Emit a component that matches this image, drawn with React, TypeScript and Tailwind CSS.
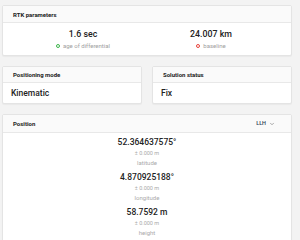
import { ChevronDown } from "lucide-react";

function Card({ title, right, head = "h-[17px]", children }: { title: string; right?: React.ReactNode; head?: string; children: React.ReactNode }) {
  return (
    <div className="rounded-[2px] border border-[#e4e4e4] bg-white shadow-[0_1px_1px_rgba(0,0,0,0.04)]">
      <div className={`flex items-center justify-between border-b border-[#e8e8e8] bg-[#fafafa] pl-[10px] pr-[10px] ${head}`}>
        <span className="text-[6px] font-bold text-[#222]">{title}</span>
        {right}
      </div>
      {children}
    </div>
  );
}

function Stat({ value, label, color }: { value: string; label: string; color: string }) {
  return (
    <div className="flex flex-col items-center">
      <span className="text-[8.8px] font-medium leading-[12px] text-[#222]">{value}</span>
      <span className="mt-[1px] flex items-center gap-[3px] text-[6px] leading-[9px] text-[#a0a0a0]">
        <span className={`inline-block h-[4px] w-[4px] rounded-full border-[1.2px] ${color}`} />
        {label}
      </span>
    </div>
  );
}

function Coord({ value, label }: { value: string; label: string }) {
  return (
    <div className="flex flex-col items-center">
      <span className="text-[8.5px] font-medium leading-[12px] text-[#222]">{value}</span>
      <span className="mt-[1px] text-[5.5px] leading-[9px] text-[#aaa]">± 0.000 m</span>
      <span className="text-[6px] leading-[9px] text-[#aaa]">{label}</span>
    </div>
  );
}

export default function App() {
  return (
    <div className="h-[240px] w-[300px] overflow-hidden bg-[#f3f3f3] pl-[2px] pr-[8px] pt-[5px] font-['Roboto',sans-serif]">
      <div className="flex flex-col gap-[10px]">
        <Card title="RTK parameters">
          <div className="grid h-[32px] grid-cols-2 items-center px-[16px]">
            <Stat value="1.6 sec" label="age of differential" color="border-[#3bb54a]" />
            <Stat value="24.007 km" label="baseline" color="border-[#e8433b]" />
          </div>
        </Card>

        <div className="grid grid-cols-2 gap-[10px]">
          <Card title="Positioning mode" head="h-[16px]">
            <div className="flex h-[20px] items-center px-[8px] text-[8.5px] font-medium text-[#222]">Kinematic</div>
          </Card>
          <Card title="Solution status" head="h-[16px]">
            <div className="flex h-[20px] items-center px-[8px] text-[8.5px] font-medium text-[#222]">Fix</div>
          </Card>
        </div>

        <Card
          title="Position"
          head="h-[18px]"
          right={
            <span className="flex items-center gap-[3px] pr-[6px] text-[5.5px] font-medium text-[#2f3e55]">
              LLH
              <ChevronDown size={6} strokeWidth={2.5} className="text-[#777]" />
            </span>
          }
        >
          <div className="flex flex-col items-center gap-[4px] pt-[3px] pb-[10px]">
            <Coord value="52.364637575°" label="latitude" />
            <Coord value="4.870925188°" label="longitude" />
            <Coord value="58.7592 m" label="height" />
          </div>
        </Card>
      </div>
    </div>
  );
}
